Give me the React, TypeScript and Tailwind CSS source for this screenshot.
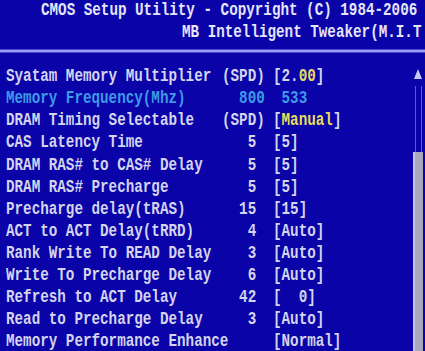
import React from "react";

type Row = {
  label: string;
  mid: string;
  val: React.ReactNode;
  cyan?: boolean;
};

const Y = ({ children }: { children: React.ReactNode }) => (
  <span className="text-[#e8dc5c]">{children}</span>
);

const rows: Row[] = [
  { label: "Syatam Memory Multiplier", mid: "(SPD)", val: <>[2.<Y>00</Y>]</> },
  { label: "Memory Frequency(Mhz)", mid: "  800", val: " 533", cyan: true },
  { label: "DRAM Timing Selectable", mid: "(SPD)", val: <>[<Y>Manual</Y>]</> },
  { label: "CAS Latency Time", mid: "   5", val: "[5]" },
  { label: "DRAM RAS# to CAS# Delay", mid: "   5", val: "[5]" },
  { label: "DRAM RAS# Precharge", mid: "   5", val: "[5]" },
  { label: "Precharge delay(tRAS)", mid: "  15", val: "[15]" },
  { label: "ACT to ACT Delay(tRRD)", mid: "   4", val: "[Auto]" },
  { label: "Rank Write To READ Delay", mid: "   3", val: "[Auto]" },
  { label: "Write To Precharge Delay", mid: "   6", val: "[Auto]" },
  { label: "Refresh to ACT Delay", mid: "  42", val: "[  0]" },
  { label: "Read to Precharge Delay", mid: "   3", val: "[Auto]" },
  { label: "Memory Performance Enhance", mid: "", val: "[Normal]" },
];

export default function App() {
  return (
    <div
      className="w-[425px] h-[351px] overflow-hidden bg-[#0a03a8] flex flex-col text-[14.25px] font-bold text-[#d4d4ee]"
      style={{ fontFamily: '"Liberation Mono", "DejaVu Sans Mono", monospace' }}
    >
      {/* Header */}
      <div className="flex flex-col text-[#e4e4fa]">
        <div className="h-[21.6px] leading-[21.6px] pl-[41px] whitespace-pre scale-y-130">
          CMOS Setup Utility - Copyright (C) 1984-2006
        </div>
        <div className="h-[21.6px] leading-[21.6px] pl-[182px] whitespace-pre scale-y-130">
          MB Intelligent Tweaker(M.I.T
        </div>
      </div>

      {/* Separator */}
      <div className="mt-[6px] h-[4px] border-y border-[#4a4ad6] bg-[#9a9af2]" />

      {/* Body */}
      <div className="flex flex-1 min-h-0">
        <div className="flex-1 flex flex-col pt-[12px] pl-[6px]">
          {rows.map((r, i) => (
            <div
              key={i}
              className={`flex h-[22.1px] leading-[22.1px] whitespace-pre scale-y-130 ${
                r.cyan ? "text-[#3e9ae6]" : ""
              }`}
            >
              <div className="w-[216px] shrink-0 whitespace-nowrap">{r.label}</div>
              <div className="w-[51px] shrink-0">{r.mid}</div>
              <div className="shrink-0">{r.val}</div>
            </div>
          ))}
        </div>

        {/* Scrollbar */}
        <div className="w-[10px] mr-[2px] flex flex-col items-center pt-[16px]">
          <svg width="8" height="10" viewBox="0 0 8 10">
            <polygon points="4,0 8,10 0,10" fill="#c6c6f4" />
          </svg>
          <div className="mt-[7px] h-[66px] w-[7px] border-x border-[#5a58dc]" />
          <div className="flex-1 w-[10px] bg-[#a9a9bc] border-l-2 border-[#c4c4ee]" />
        </div>
      </div>
    </div>
  );
}
